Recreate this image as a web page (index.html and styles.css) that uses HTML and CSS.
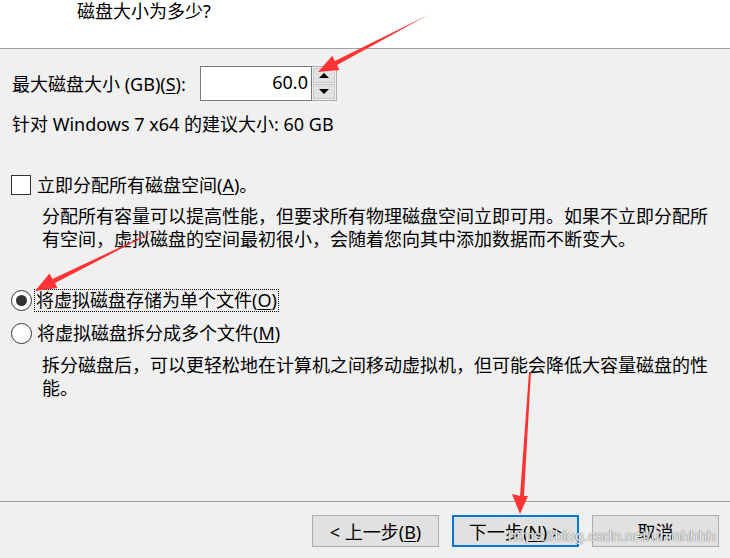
FILE: index.html
```html
<!DOCTYPE html>
<html lang="zh-CN">
<head>
<meta charset="utf-8">
<link rel="stylesheet" href="styles.css">
</head>
<body>
<div class="page">
  <header class="head">
    <div class="title">磁盘大小为多少?</div>
  </header>
  <main class="main">
    <div class="size-row">
      <label class="size-label">最大磁盘大小 (GB)(<u>S</u>):</label>
      <div class="spin">
        <div class="spin-input">60.0</div>
        <div class="spin-btns">
          <div class="spin-btn"><span class="tri up"></span></div>
          <div class="spin-btn"><span class="tri down"></span></div>
        </div>
      </div>
    </div>
    <div class="hint">针对 Windows 7 x64 的建议大小: 60 GB</div>

    <div class="opt check-row">
      <span class="checkbox"></span>
      <span class="opt-text">立即分配所有磁盘空间(<u>A</u>)。</span>
    </div>
    <p class="desc">分配所有容量可以提高性能，但要求所有物理磁盘空间立即可用。如果不立即分配所有空间，虚拟磁盘的空间最初很小，会随着您向其中添加数据而不断变大。</p>

    <div class="opt radio-row first">
      <span class="radio checked"></span>
      <span class="opt-text focus">将虚拟磁盘存储为单个文件(<u>O</u>)</span>
    </div>
    <div class="opt radio-row second">
      <span class="radio"></span>
      <span class="opt-text">将虚拟磁盘拆分成多个文件(<u>M</u>)</span>
    </div>
    <p class="desc">拆分磁盘后，可以更轻松地在计算机之间移动虚拟机，但可能会降低大容量磁盘的性能。</p>
  </main>
  <footer class="foot">
    <button class="btn">&lt; 上一步(<u>B</u>)</button>
    <button class="btn primary">下一步(<u>N</u>) &gt;</button>
    <button class="btn">取消</button>
  </footer>

  <svg class="arrows" width="730" height="558" viewBox="0 0 730 558">
    <polygon fill="#ff3333" points="428,15 337,65 339.5,70 318,72 332.3,55.8 334.9,61"/>
    <polygon fill="#ff3333" points="161,228 55,283 57.5,288 35,291 49.5,273.5 52.5,279"/>
    <polygon fill="#ff3333" points="531,372 524,496 528,496 520,514 512,494 520,496 529,372"/>
  </svg>
  <div class="watermark">https://blog.csdn.net/uhmhhhh</div>
</div>
</body>
</html>
```

FILE: styles.css
```css
* { box-sizing: border-box; }
html, body { margin: 0; padding: 0; }
body {
  width: 730px;
  height: 558px;
  overflow: hidden;
  background: #f0f0f0;
  font-family: "Noto Sans", "Noto Sans CJK SC", sans-serif;
  font-size: 18px;
  color: #000;
}
u { text-decoration: underline; text-underline-offset: 2px; }
.page {
  position: relative;
  width: 730px;
  height: 558px;
  display: flex;
  flex-direction: column;
}
.head {
  height: 49px;
  background: #fff;
  border-bottom: 1px solid #a0a0a0;
}
.title {
  padding-left: 77px;
  padding-top: 1px;
  line-height: 20px;
}
.main {
  flex: 1;
  padding: 0 12px;
}
.size-row {
  display: flex;
  align-items: center;
  margin-top: 17px;
  height: 35px;
}
.size-label { width: 188px; line-height: 24px; white-space: nowrap; }
.spin { display: flex; height: 35px; }
.spin-input {
  width: 112px;
  height: 35px;
  background: #fff;
  border: 1px solid #7a7a7a;
  text-align: right;
  padding-right: 3px;
  line-height: 31px;
}
.spin-btns {
  width: 25px;
  display: flex;
  flex-direction: column;
  border: 1px solid #adadad;
  border-left: none;
  padding: 1px;
  gap: 1px;
}
.spin-btn {
  flex: 1;
  background: #e1e1e1;
  border: 1px solid #c8c8c8;
  display: flex;
  align-items: center;
  justify-content: center;
}
.tri { width: 0; height: 0; border-left: 5px solid transparent; border-right: 5px solid transparent; }
.tri.up { border-bottom: 5px solid #000; }
.tri.down { border-top: 5px solid #000; }
.hint {
  margin-top: 11px;
  line-height: 24px;
}
.opt {
  display: flex;
  align-items: center;
  height: 24px;
}
.check-row { margin-top: 37px; margin-left: -1px; }
.checkbox {
  width: 20px;
  height: 20px;
  background: #fff;
  border: 1px solid #333;
  margin-right: 6px;
}
.opt-text { line-height: 21px; }
.focus { outline: 1px dotted #000; outline-offset: 0; padding: 0 1px; margin-left: -2px; }
.desc {
  margin: 8px 0 0 30px;
  line-height: 23px;
}
.radio-row.first { margin-top: 37px; margin-left: -1px; }
.radio-row.second { margin-top: 9px; margin-left: -1px; }
.radio {
  width: 21px;
  height: 21px;
  border-radius: 50%;
  border: 1px solid #333;
  background: #fff;
  margin-right: 5px;
  display: flex;
  align-items: center;
  justify-content: center;
}
.radio.checked::after {
  content: "";
  width: 11px;
  height: 11px;
  border-radius: 50%;
  background: #333;
}
.radio-row.second + .desc { margin-top: 9px; }
.foot {
  height: 57px;
  border-top: 1px solid #a0a0a0;
  display: flex;
  justify-content: flex-end;
  align-items: flex-start;
  padding: 13px 11px 0 0;
  gap: 13px;
}
.btn {
  width: 127px;
  height: 32px;
  background: #e1e1e1;
  border: 1px solid #adadad;
  font: inherit;
  color: #000;
  padding: 0;
}
.btn.primary { border: 2px solid #0078d7; }
.arrows { position: absolute; left: 0; top: 0; pointer-events: none; }
.watermark {
  position: absolute;
  left: 508px;
  top: 527px;
  font-family: "Liberation Sans", sans-serif;
  font-size: 15.5px;
  color: rgba(255,255,255,0.9);
  text-shadow: 0 0 1px rgba(90,90,90,0.9), 0 0 1px rgba(90,90,90,0.7);
  pointer-events: none;
  white-space: nowrap;
}
```
